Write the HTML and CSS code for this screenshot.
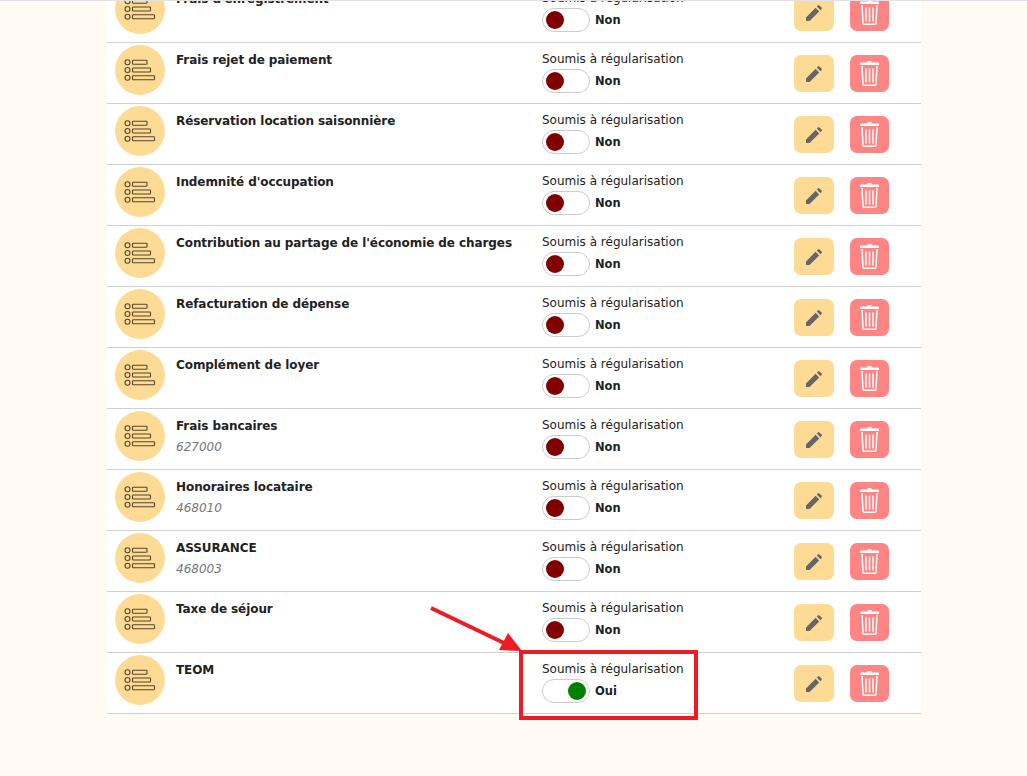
FILE: index.html
```html
<!DOCTYPE html>
<html lang="fr">
<head>
    <meta charset="UTF-8">
    <title>Types de charges</title>
    <link rel="stylesheet" href="styles.css">
</head>
<body>
    <svg width="0" height="0" class="defs">
        <symbol id="ico-list" viewBox="0 0 32 24">
            <g fill="none" stroke="#55452a" stroke-width="1.100">
                <circle cx="3.500" cy="4.300" r="2.500"/><rect x="8.500" y="2.300" width="14.500" height="4" rx="0.800"/>
                <circle cx="3.500" cy="12" r="2.500"/><rect x="8.500" y="10" width="18" height="4" rx="0.800"/>
                <circle cx="3.500" cy="19.700" r="2.500"/><rect x="8.500" y="17.700" width="22" height="4" rx="0.800"/>
            </g>
        </symbol>
        <symbol id="ico-pen" viewBox="0 0 16 16">
            <path fill="#666" d="M0 16v-3.600L9.600 2.800l3.600 3.600L3.600 16zM10.800 1.600l1.200-1.200a1 1 0 0 1 1.400 0l2.200 2.200a1 1 0 0 1 0 1.400l-1.200 1.200z"/>
        </symbol>
        <symbol id="ico-trash" viewBox="0 0 19 25">
            <path fill="#fff" d="M7.500 0h4v1.500h6.500a1 1 0 0 1 1 1V4H0V2.500a1 1 0 0 1 1-1h6.500z"/>
            <g fill="none" stroke="#fff" stroke-width="1.500">
                <path d="M2 5l1 18a1.200 1.200 0 0 0 1.200 1.200h10.600A1.200 1.200 0 0 0 16 23l1-18"/>
                <path d="M6 7.500v14M9.500 7.500v14M13 7.500v14"/>
            </g>
        </symbol>
    </svg>

    <div class="page">
        <ul class="liste">
            <li class="ligne">
                <span class="avatar"><svg class="ico-list"><use href="#ico-list"/></svg></span>
                <div class="infos"><div class="titre">Frais d'enregistrement</div></div>
                <div class="regul"><div>Soumis à régularisation</div><div class="etat"><span class="toggle"><i></i></span><b>Non</b></div></div>
                <div class="actions"><a class="btn btn-edit"><svg class="ico-pen"><use href="#ico-pen"/></svg></a><a class="btn btn-del"><svg class="ico-trash"><use href="#ico-trash"/></svg></a></div>
            </li>
            <li class="ligne">
                <span class="avatar"><svg class="ico-list"><use href="#ico-list"/></svg></span>
                <div class="infos"><div class="titre">Frais rejet de paiement</div></div>
                <div class="regul"><div>Soumis à régularisation</div><div class="etat"><span class="toggle"><i></i></span><b>Non</b></div></div>
                <div class="actions"><a class="btn btn-edit"><svg class="ico-pen"><use href="#ico-pen"/></svg></a><a class="btn btn-del"><svg class="ico-trash"><use href="#ico-trash"/></svg></a></div>
            </li>
            <li class="ligne">
                <span class="avatar"><svg class="ico-list"><use href="#ico-list"/></svg></span>
                <div class="infos"><div class="titre">Réservation location saisonnière</div></div>
                <div class="regul"><div>Soumis à régularisation</div><div class="etat"><span class="toggle"><i></i></span><b>Non</b></div></div>
                <div class="actions"><a class="btn btn-edit"><svg class="ico-pen"><use href="#ico-pen"/></svg></a><a class="btn btn-del"><svg class="ico-trash"><use href="#ico-trash"/></svg></a></div>
            </li>
            <li class="ligne">
                <span class="avatar"><svg class="ico-list"><use href="#ico-list"/></svg></span>
                <div class="infos"><div class="titre">Indemnité d'occupation</div></div>
                <div class="regul"><div>Soumis à régularisation</div><div class="etat"><span class="toggle"><i></i></span><b>Non</b></div></div>
                <div class="actions"><a class="btn btn-edit"><svg class="ico-pen"><use href="#ico-pen"/></svg></a><a class="btn btn-del"><svg class="ico-trash"><use href="#ico-trash"/></svg></a></div>
            </li>
            <li class="ligne">
                <span class="avatar"><svg class="ico-list"><use href="#ico-list"/></svg></span>
                <div class="infos"><div class="titre">Contribution au partage de l'économie de charges</div></div>
                <div class="regul"><div>Soumis à régularisation</div><div class="etat"><span class="toggle"><i></i></span><b>Non</b></div></div>
                <div class="actions"><a class="btn btn-edit"><svg class="ico-pen"><use href="#ico-pen"/></svg></a><a class="btn btn-del"><svg class="ico-trash"><use href="#ico-trash"/></svg></a></div>
            </li>
            <li class="ligne">
                <span class="avatar"><svg class="ico-list"><use href="#ico-list"/></svg></span>
                <div class="infos"><div class="titre">Refacturation de dépense</div></div>
                <div class="regul"><div>Soumis à régularisation</div><div class="etat"><span class="toggle"><i></i></span><b>Non</b></div></div>
                <div class="actions"><a class="btn btn-edit"><svg class="ico-pen"><use href="#ico-pen"/></svg></a><a class="btn btn-del"><svg class="ico-trash"><use href="#ico-trash"/></svg></a></div>
            </li>
            <li class="ligne">
                <span class="avatar"><svg class="ico-list"><use href="#ico-list"/></svg></span>
                <div class="infos"><div class="titre">Complément de loyer</div></div>
                <div class="regul"><div>Soumis à régularisation</div><div class="etat"><span class="toggle"><i></i></span><b>Non</b></div></div>
                <div class="actions"><a class="btn btn-edit"><svg class="ico-pen"><use href="#ico-pen"/></svg></a><a class="btn btn-del"><svg class="ico-trash"><use href="#ico-trash"/></svg></a></div>
            </li>
            <li class="ligne">
                <span class="avatar"><svg class="ico-list"><use href="#ico-list"/></svg></span>
                <div class="infos"><div class="titre">Frais bancaires</div><div class="compte">627000</div></div>
                <div class="regul"><div>Soumis à régularisation</div><div class="etat"><span class="toggle"><i></i></span><b>Non</b></div></div>
                <div class="actions"><a class="btn btn-edit"><svg class="ico-pen"><use href="#ico-pen"/></svg></a><a class="btn btn-del"><svg class="ico-trash"><use href="#ico-trash"/></svg></a></div>
            </li>
            <li class="ligne">
                <span class="avatar"><svg class="ico-list"><use href="#ico-list"/></svg></span>
                <div class="infos"><div class="titre">Honoraires locataire</div><div class="compte">468010</div></div>
                <div class="regul"><div>Soumis à régularisation</div><div class="etat"><span class="toggle"><i></i></span><b>Non</b></div></div>
                <div class="actions"><a class="btn btn-edit"><svg class="ico-pen"><use href="#ico-pen"/></svg></a><a class="btn btn-del"><svg class="ico-trash"><use href="#ico-trash"/></svg></a></div>
            </li>
            <li class="ligne">
                <span class="avatar"><svg class="ico-list"><use href="#ico-list"/></svg></span>
                <div class="infos"><div class="titre">ASSURANCE</div><div class="compte">468003</div></div>
                <div class="regul"><div>Soumis à régularisation</div><div class="etat"><span class="toggle"><i></i></span><b>Non</b></div></div>
                <div class="actions"><a class="btn btn-edit"><svg class="ico-pen"><use href="#ico-pen"/></svg></a><a class="btn btn-del"><svg class="ico-trash"><use href="#ico-trash"/></svg></a></div>
            </li>
            <li class="ligne">
                <span class="avatar"><svg class="ico-list"><use href="#ico-list"/></svg></span>
                <div class="infos"><div class="titre">Taxe de séjour</div></div>
                <div class="regul"><div>Soumis à régularisation</div><div class="etat"><span class="toggle"><i></i></span><b>Non</b></div></div>
                <div class="actions"><a class="btn btn-edit"><svg class="ico-pen"><use href="#ico-pen"/></svg></a><a class="btn btn-del"><svg class="ico-trash"><use href="#ico-trash"/></svg></a></div>
            </li>
            <li class="ligne">
                <span class="avatar"><svg class="ico-list"><use href="#ico-list"/></svg></span>
                <div class="infos"><div class="titre">TEOM</div></div>
                <div class="regul"><div>Soumis à régularisation</div><div class="etat"><span class="toggle on"><i></i></span><b>Oui</b></div></div>
                <div class="actions"><a class="btn btn-edit"><svg class="ico-pen"><use href="#ico-pen"/></svg></a><a class="btn btn-del"><svg class="ico-trash"><use href="#ico-trash"/></svg></a></div>
            </li>
        </ul>
    </div>

    <!-- annotation de la capture -->
    <div class="cadre-rouge"></div>
    <svg class="fleche" width="110" height="60" viewBox="0 0 110 60">
        <path d="M1 3 L74 38" stroke="#ed1c24" stroke-width="4" fill="none"/>
        <path d="M78 28 L69 45 L92 46 Z" fill="#ed1c24"/>
    </svg>
</body>
</html>
```
FILE: styles.css
```css
html, body {
    height: 100%;
}

body {
    margin: 0;
    background: #fffbf3;
    font-family: "DejaVu Sans", sans-serif;
    font-size: 12px;
    color: #222;
    overflow: hidden;
    position: relative;
}

/* petit liseré en haut de la fenêtre */
body::before {
    content: "";
    position: absolute;
    top: 0;
    left: 0;
    right: 0;
    height: 1px;
    background: #e2e2e2;
    z-index: 2;
}

.defs {
    position: absolute;
}

.page {
    width: 814px;
    margin: -18px 0 0 107px;
    background: #fff;
}

.liste {
    list-style: none;
    margin: 0;
    padding: 0;
}

.ligne {
    display: flex;
    height: 60px;
    border-bottom: 1px solid #d0d0d0;
}

.avatar {
    flex: none;
    width: 50px;
    height: 50px;
    margin: 2px 11px 0 8px;
    border-radius: 50%;
    background: #fddb95;
    display: flex;
    align-items: center;
    justify-content: center;
}

.ico-list {
    width: 32px;
    height: 24px;
}

.infos {
    width: 366px;
    padding-top: 10px;
}

.titre {
    font-size: 12px;
    font-weight: bold;
    line-height: 15px;
    letter-spacing: -0.08px;
}

.compte {
    margin-top: 5px;
    font-size: 12px;
    font-style: italic;
    line-height: 16px;
    color: #777;
}

.regul {
    width: 252px;
    padding-top: 9px;
    line-height: 15px;
}

.etat {
    display: flex;
    align-items: center;
    gap: 5px;
    margin-top: 2px;
}

.etat b {
    font-size: 11.500px;
}

.toggle {
    box-sizing: border-box;
    width: 48px;
    height: 24px;
    border: 1px solid #ccc;
    border-radius: 12px;
    background: #fff;
    display: flex;
    align-items: center;
    padding: 0 3px;
}

.toggle i {
    width: 18px;
    height: 18px;
    border-radius: 50%;
    background: #800000;
}

.toggle.on {
    justify-content: flex-end;
}

.toggle.on i {
    background: #008000;
}

.actions {
    display: flex;
    gap: 16px;
    padding-top: 12px;
}

.btn {
    height: 37px;
    border-radius: 7px;
    display: flex;
    align-items: center;
    justify-content: center;
}

.btn-edit {
    width: 40px;
    background: #fddb95;
}

.btn-del {
    width: 39px;
    background: #ff8585;
}

.ico-pen {
    width: 16px;
    height: 16px;
}

.ico-trash {
    width: 19px;
    height: 25px;
}

.cadre-rouge {
    position: absolute;
    left: 519px;
    top: 650px;
    width: 171px;
    height: 62px;
    border: 4px solid #ed1c24;
}

.fleche {
    position: absolute;
    left: 430px;
    top: 605px;
}
```
